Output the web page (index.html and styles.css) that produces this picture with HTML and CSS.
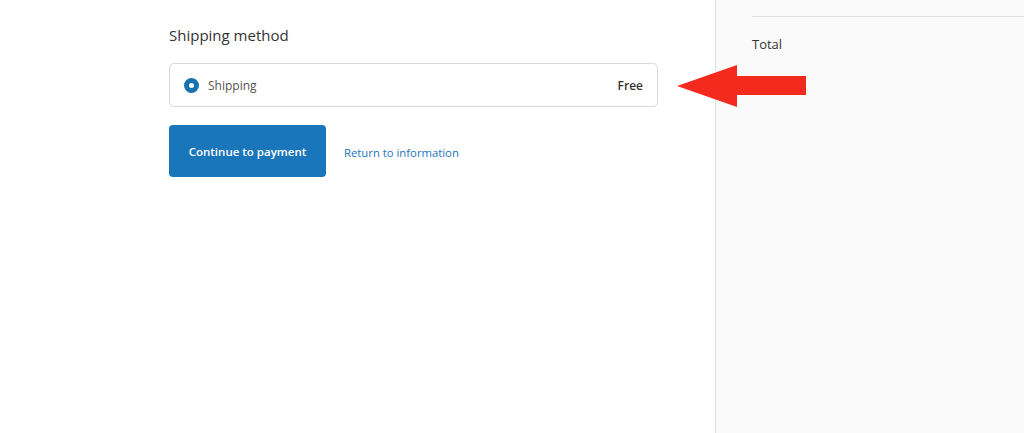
FILE: index.html
```html
<!DOCTYPE html>
<html lang="en">
<head>
<meta charset="UTF-8">
<meta name="viewport" content="width=device-width, initial-scale=1.0">
<title>Shipping</title>
<link rel="stylesheet" href="styles.css">
</head>
<body>

<div class="page">
  <div class="main">
    <h2 class="section-title">Shipping method</h2>

    <div class="rate-box">
      <label class="rate">
        <span class="radio"></span>
        <span class="rate-name">Shipping</span>
        <span class="rate-price">Free</span>
      </label>
    </div>

    <div class="step-footer">
      <button class="btn">Continue to payment</button>
      <a class="link" href="#">Return to information</a>
    </div>

    <!-- flecha roja de la captura -->
    <svg class="arrow" width="130" height="44" viewBox="0 0 130 44">
      <polygon points="0,21 60,0 60,11 129,11 129,30 60,30 60,42" fill="#f42a1f"/>
    </svg>
  </div>

  <div class="sidebar">
    <div class="summary-top"></div>
    <div class="total-row">
      <span>Total</span>
    </div>
  </div>
</div>

</body>
</html>
```

FILE: styles.css
```css
* {
  box-sizing: border-box;
  margin: 0;
  padding: 0;
}

body {
  font-family: "Open Sans", Arial, sans-serif;
  background-color: #fff;
  color: #333;
  height: 100vh;
  overflow: hidden;
}

.page {
  display: flex;
  height: 100%;
}

.main {
  position: relative;
  width: 715px;
  padding: 25px 57px 0 169px;
}

.section-title {
  font-size: 15px;
  font-weight: 400;
  line-height: 20px;
  color: #333;
  margin-bottom: 18px;
}

.rate-box {
  border: 1px solid #d9d9d9;
  border-radius: 5px;
  background-color: #fff;
}

.rate {
  display: flex;
  align-items: center;
  height: 42px;
  padding: 0 14px 0 14px;
  font-size: 12px;
}

.radio {
  width: 15px;
  height: 15px;
  border-radius: 50%;
  border: 5px solid #1773b0;
  background-color: #fff;
  margin-right: 9px;
}

.rate-name {
  flex: 1;
  color: #545454;
}

.rate-price {
  font-weight: 600;
  color: #333;
}

.step-footer {
  display: flex;
  align-items: center;
  margin-top: 18px;
}

.btn {
  font-family: inherit;
  font-size: 11.5px;
  font-weight: 600;
  color: #fff;
  background-color: #1a76ba;
  border: none;
  border-radius: 4px;
  width: 157px;
  height: 52px;
  cursor: pointer;
}

.link {
  font-size: 11.3px;
  color: #1a76ba;
  text-decoration: none;
  margin-left: 18px;
  padding-top: 2px;
}

.arrow {
  position: absolute;
  left: 677px;
  top: 65px;
}

.sidebar {
  flex: 1;
  background-color: #fafafa;
  border-left: 1px solid #e1e1e1;
  padding-left: 36px;
}

.summary-top {
  height: 17px;
  border-bottom: 1px solid #e1e1e1;
}

.total-row {
  margin-top: 18px;
  font-size: 13px;
  color: #333;
}
```
